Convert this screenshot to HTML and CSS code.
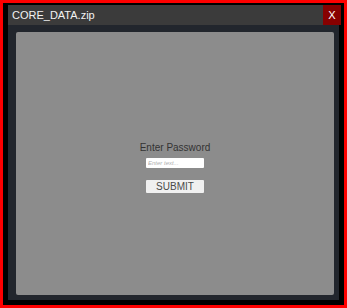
FILE: index.html
```html
<!DOCTYPE html>
<html lang="en">
<head>
    <meta charset="UTF-8">
    <meta name="viewport" content="width=device-width, initial-scale=1.0">
    <title>CORE_DATA.zip</title>
    <link rel="stylesheet" href="styles.css">
</head>
<body>
    <div class="frame">
        <div class="window">
            <div class="titlebar">
                <span class="title">CORE_DATA.zip</span>
                <button class="close">X</button>
            </div>
            <div class="window-body">
                <div class="panel">
                    <div class="prompt">Enter Password</div>
                    <input type="text" class="password" placeholder="Enter text...">
                    <button class="submit">SUBMIT</button>
                </div>
            </div>
        </div>
    </div>
</body>
</html>
```

FILE: styles.css
```css
html, body {
    margin: 0;
    padding: 0;
    background-color: #000;
}
body {
    font-family: "Liberation Sans", Arial, sans-serif;
}
.frame {
    box-sizing: border-box;
    width: 347px;
    height: 308px;
    border: 3px solid #ff0000;
    background-color: #000;
    padding: 2px 3px 5px 5px;
}
.window {
    display: flex;
    flex-direction: column;
    height: 100%;
}
.titlebar {
    display: flex;
    align-items: center;
    justify-content: space-between;
    height: 20px;
    background-color: #3b3b3b;
}
.title {
    color: #f2f2f2;
    font-size: 11px;
    padding-left: 4px;
}
.close {
    width: 18px;
    height: 20px;
    border: none;
    padding: 0;
    background-color: #870000;
    color: #fff;
    font-family: "Liberation Sans", Arial, sans-serif;
    font-size: 11px;
}
.window-body {
    flex: 1;
    display: flex;
    margin-right: 2px;
    padding: 7px 5px 5px 8px;
    background-color: #22262d;
}
.panel {
    flex: 1;
    display: flex;
    flex-direction: column;
    align-items: center;
    justify-content: center;
    padding-top: 8px;
    background-color: #8c8c8c;
    border-radius: 2px;
}
.prompt {
    color: #333;
    font-size: 10px;
    margin-bottom: 5px;
}
.password {
    box-sizing: border-box;
    width: 58px;
    height: 10px;
    padding: 0 2px;
    border: none;
    border-radius: 1px;
    background-color: #fff;
    font-family: "Liberation Sans", Arial, sans-serif;
    font-size: 6px;
}
.password::placeholder {
    color: #b0b0b0;
    font-style: italic;
}
.submit {
    box-sizing: border-box;
    width: 58px;
    height: 13px;
    margin-top: 12px;
    padding: 0;
    border: none;
    border-radius: 1px;
    background-color: #f0f0f0;
    color: #4a4a4a;
    font-family: "Liberation Sans", Arial, sans-serif;
    font-size: 10px;
}
```
